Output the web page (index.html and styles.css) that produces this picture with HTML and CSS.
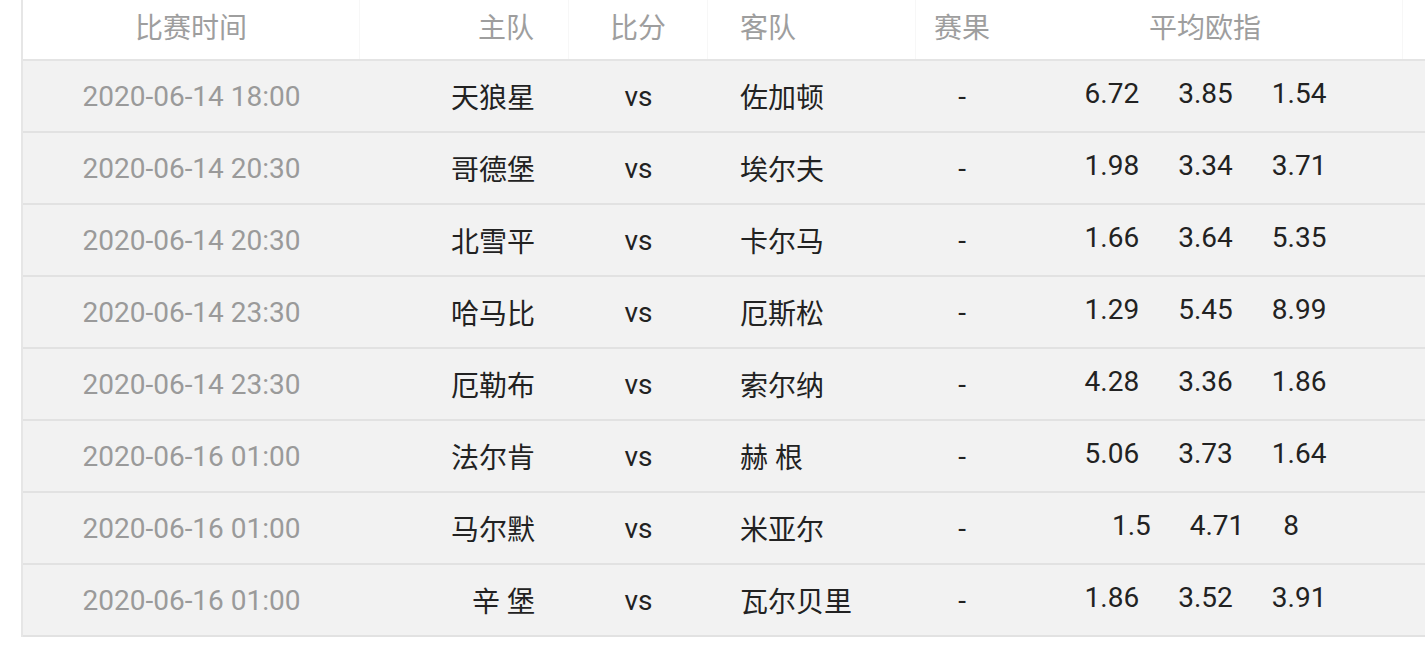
FILE: index.html
```html
<!DOCTYPE html>
<html lang="zh-CN">
<head>
<meta charset="utf-8">
<title>赛程</title>
<link rel="stylesheet" href="styles.css">
</head>
<body>
<div class="table">
  <div class="row head">
    <div class="cell c-time">比赛时间</div>
    <div class="cell c-home">主队</div>
    <div class="cell c-score">比分</div>
    <div class="cell c-away">客队</div>
    <div class="cell c-res">赛果</div>
    <div class="cell c-odds">平均欧指</div>
    <div class="cell c-rest"></div>
  </div>
  <div class="row">
    <div class="cell c-time">2020-06-14 18:00</div>
    <div class="cell c-home">天狼星</div>
    <div class="cell c-score">vs</div>
    <div class="cell c-away">佐加顿</div>
    <div class="cell c-res">-</div>
    <div class="cell c-odds"><span>6.72</span><span>3.85</span><span>1.54</span></div>
    <div class="cell c-rest"></div>
  </div>
  <div class="row">
    <div class="cell c-time">2020-06-14 20:30</div>
    <div class="cell c-home">哥德堡</div>
    <div class="cell c-score">vs</div>
    <div class="cell c-away">埃尔夫</div>
    <div class="cell c-res">-</div>
    <div class="cell c-odds"><span>1.98</span><span>3.34</span><span>3.71</span></div>
    <div class="cell c-rest"></div>
  </div>
  <div class="row">
    <div class="cell c-time">2020-06-14 20:30</div>
    <div class="cell c-home">北雪平</div>
    <div class="cell c-score">vs</div>
    <div class="cell c-away">卡尔马</div>
    <div class="cell c-res">-</div>
    <div class="cell c-odds"><span>1.66</span><span>3.64</span><span>5.35</span></div>
    <div class="cell c-rest"></div>
  </div>
  <div class="row">
    <div class="cell c-time">2020-06-14 23:30</div>
    <div class="cell c-home">哈马比</div>
    <div class="cell c-score">vs</div>
    <div class="cell c-away">厄斯松</div>
    <div class="cell c-res">-</div>
    <div class="cell c-odds"><span>1.29</span><span>5.45</span><span>8.99</span></div>
    <div class="cell c-rest"></div>
  </div>
  <div class="row">
    <div class="cell c-time">2020-06-14 23:30</div>
    <div class="cell c-home">厄勒布</div>
    <div class="cell c-score">vs</div>
    <div class="cell c-away">索尔纳</div>
    <div class="cell c-res">-</div>
    <div class="cell c-odds"><span>4.28</span><span>3.36</span><span>1.86</span></div>
    <div class="cell c-rest"></div>
  </div>
  <div class="row">
    <div class="cell c-time">2020-06-16 01:00</div>
    <div class="cell c-home">法尔肯</div>
    <div class="cell c-score">vs</div>
    <div class="cell c-away">赫 根</div>
    <div class="cell c-res">-</div>
    <div class="cell c-odds"><span>5.06</span><span>3.73</span><span>1.64</span></div>
    <div class="cell c-rest"></div>
  </div>
  <div class="row">
    <div class="cell c-time">2020-06-16 01:00</div>
    <div class="cell c-home">马尔默</div>
    <div class="cell c-score">vs</div>
    <div class="cell c-away">米亚尔</div>
    <div class="cell c-res">-</div>
    <div class="cell c-odds"><span>1.5</span><span>4.71</span><span>8</span></div>
    <div class="cell c-rest"></div>
  </div>
  <div class="row">
    <div class="cell c-time">2020-06-16 01:00</div>
    <div class="cell c-home">辛 堡</div>
    <div class="cell c-score">vs</div>
    <div class="cell c-away">瓦尔贝里</div>
    <div class="cell c-res">-</div>
    <div class="cell c-odds"><span>1.86</span><span>3.52</span><span>3.91</span></div>
    <div class="cell c-rest"></div>
  </div>
</div>
</body>
</html>
```

FILE: styles.css
```css
html, body {
  margin: 0;
  padding: 0;
  background: #ffffff;
  overflow: hidden;
}

body {
  font-family: Roboto, "Noto Sans CJK SC", sans-serif;
  font-size: 28px;
  color: #222222;
}

.table {
  margin-left: 21px;
  border-left: 2px solid #e6e6e6;
  width: 1420px;
}

.row {
  display: grid;
  grid-template-columns: 337px 209px 139px 208px 92px 395px 1fr;
  height: 70px;
  background: #f2f2f2;
  border-bottom: 2px solid #e2e2e2;
}

.row.head {
  height: 59px;
  background: #ffffff;
  border-bottom: 2px solid #e4e4e4;
  color: #9e9e9e;
}

.cell {
  display: flex;
  align-items: center;
  white-space: pre;
}

.head .cell {
  border-right: 1px solid #f7f7f7;
  padding-bottom: 8px;
}

.head .cell.c-res,
.head .cell.c-rest {
  border-right: none;
}

.c-time {
  justify-content: center;
  color: #9a9a9a;
}

.head .c-time {
  color: #9e9e9e;
}

.c-home {
  justify-content: flex-end;
  padding-right: 34px;
}

.c-score {
  justify-content: center;
}

.c-away {
  justify-content: flex-start;
  padding-left: 32px;
}

.c-res {
  justify-content: center;
}

.c-odds {
  justify-content: center;
  gap: 39px;
  padding-bottom: 6px;
}

.head .c-odds {
  padding-bottom: 8px;
}
```
